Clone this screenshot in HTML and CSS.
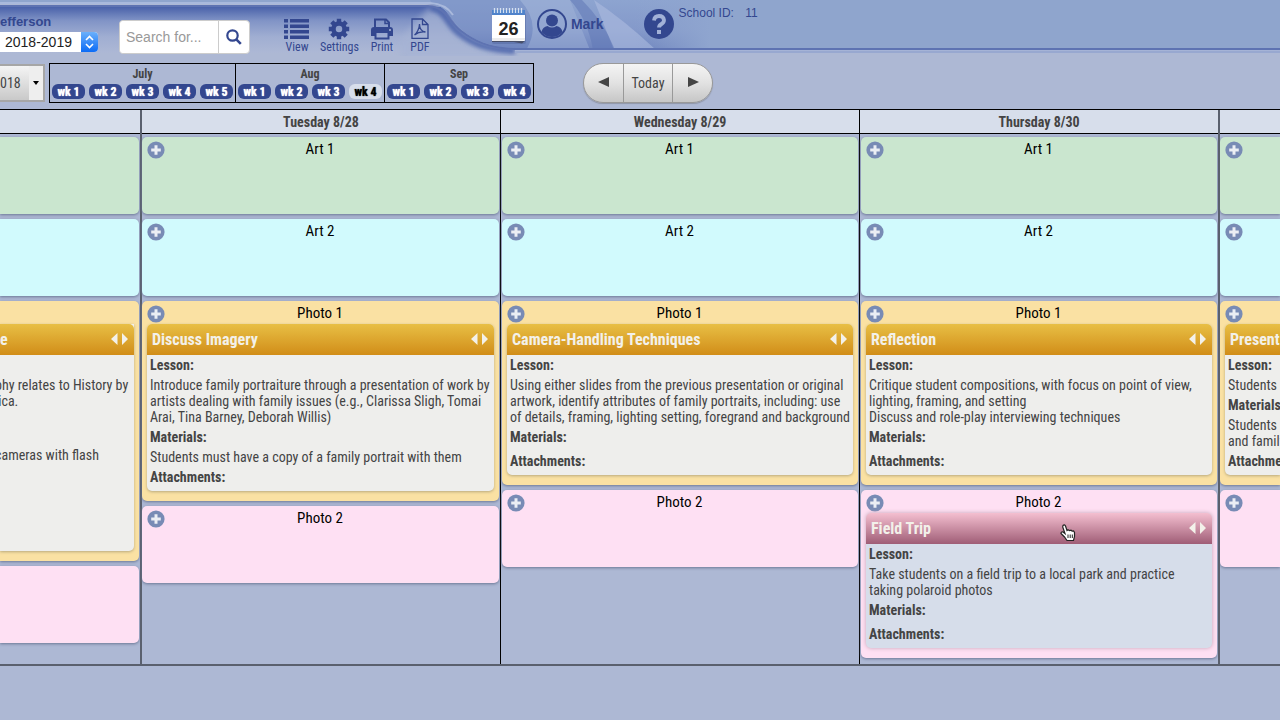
FILE: index.html
```html
<!DOCTYPE html>
<html lang="en">

<head>
    <meta charset="UTF-8">
    <meta name="viewport" content="width=device-width, initial-scale=1.0">
    <title>Lesson planner</title>
    <link rel="stylesheet" href="styles.css">
</head>

<body>
    <svg class="icon-defs" width="0" height="0">
        <symbol id="plus" viewBox="0 0 18 18">
            <circle cx="9" cy="9" r="8.6" fill="#788bb5"/>
            <path d="M9 4.2v9.6M4.2 9h9.6" stroke="#fff" stroke-opacity="0.85" stroke-width="3"/>
        </symbol>
        <symbol id="arrows" viewBox="0 0 18 14">
            <path d="M6.500 0v12L0 6zM11 0v12l6-6z" fill="#f3f1ea"/>
        </symbol>
    </svg>

    <header class="banner">
        <svg class="banner-art" height="56" aria-hidden="true">
            <defs>
                <linearGradient id="glow" x1="0" y1="0" x2="0" y2="1">
                    <stop offset="0" stop-color="#4a62aa"/>
                    <stop offset="0.3" stop-color="#8194c6"/>
                    <stop offset="0.65" stop-color="#a0aed2"/>
                    <stop offset="1" stop-color="#adb8d5"/>
                </linearGradient>
                <linearGradient id="sky" x1="0" y1="0" x2="0" y2="1">
                    <stop offset="0" stop-color="#8da4d0"/>
                    <stop offset="0.6" stop-color="#8499ca"/>
                    <stop offset="1" stop-color="#6d83bd"/>
                </linearGradient>
                <linearGradient id="fade" x1="0" y1="0" x2="1" y2="0">
                    <stop offset="0.5" stop-color="#8fa5cf" stop-opacity="0"/>
                    <stop offset="1" stop-color="#8fa5cf"/>
                </linearGradient>
                <filter id="soft"><feGaussianBlur stdDeviation="3"/></filter>
                <filter id="softer" x="-20%" y="-50%" width="140%" height="200%"><feGaussianBlur stdDeviation="2"/></filter>
                <clipPath id="skyClip"><path d="M0 0H4000V48H515C488 47 474 40 462 30C450 20 448 5 430 4H0z"/></clipPath>
            </defs>
            <rect y="7" width="470" height="46" fill="url(#glow)"/>
            <path d="M430 7C446 9 448 22 460 32C474 43 488 49 515 50V60H400V40z" fill="#a6b3d4" opacity="0.7" filter="url(#soft)"/>
            <path d="M430 8C446 9 446 24 460 34C474 45 490 50 515 51" stroke="#5068ad" stroke-width="6" fill="none" filter="url(#softer)"/>
            <path d="M0 0H4000V48H515C488 47 474 40 462 30C450 20 448 5 430 4H0z" fill="#8fa5cd"/>
            <g clip-path="url(#skyClip)">
                <rect x="430" width="280" height="50" fill="url(#sky)"/>
                <path d="M430 0h90q22 24 6 50h-60z" fill="#6f86bf" opacity="0.35"/>
                <path d="M520 0h50l20 50h-64q16-26-6-50z" fill="#a3b5da" opacity="0.45"/>
                <path d="M594 0q30 20 62 50h-42z" fill="#a8b8dd" opacity="0.7"/>
                <path d="M570 0h12q22 22 33 50h-22q-5-30-23-50z" fill="#6178b6" opacity="0.55"/>
                <rect x="560" width="150" height="50" fill="url(#fade)"/>
                <path d="M0 3H430Q446 4 453 15" stroke="#a9b9dc" stroke-width="2" fill="none"/>
            </g>
            <path d="M0 6H428C446 7 448 21 461 31C474 41 488 48 515 49H4000" stroke="#5e73b2" stroke-width="2" fill="none"/>
            <path d="M515 50.500H4000" stroke="#a5b3d6" stroke-width="1"/>
            <path d="M515 52H4000" stroke="#98a8d0" stroke-width="2"/>
        </svg>

        <div class="toolbar">
            <div class="school-year">
                <label for="year">efferson</label>
                <span class="year-box">
                    <select id="year">
                        <option>2018-2019</option>
                    </select>
                    <svg width="17" height="20" viewBox="0 0 17 20"><path d="M5 8l3.500-3.500L12 8M5 12l3.500 3.500L12 12" fill="none" stroke="#fff" stroke-width="1.600"/></svg>
                </span>
            </div>

            <form class="search">
                <input type="text" aria-label="Search" placeholder="Search for...">
                <button type="button" aria-label="Search">
                    <svg width="18" height="18" viewBox="0 0 18 18"><circle cx="7.500" cy="7.500" r="5.200" fill="none" stroke="#33478f" stroke-width="2.200"/><path d="M11.300 11.300l4.500 4.500" stroke="#33478f" stroke-width="2.600"/></svg>
                </button>
            </form>

            <nav class="tools">
                <button type="button">
                    <svg width="26" height="22" viewBox="0 0 26 22" fill="#33478f"><path d="M0 1h4v3.500H0zM6 1h19v3.500H6zM0 6.500h4V10H0zM6 6.500h19V10H6zM0 12h4v3.500H0zM6 12h19v3.500H6zM0 17.500h4V21H0zM6 17.500h19V21H6z"/></svg>
                    View
                </button>
                <button type="button">
                    <svg width="22" height="22" viewBox="0 0 22 22"><circle cx="11" cy="11" r="5.500" fill="none" stroke="#33478f" stroke-width="4.500"/><path d="M11 .8v4M11 17.200v4M.8 11h4M17.200 11h4M3.800 3.800l2.800 2.800M15.400 15.400l2.800 2.800M18.200 3.800l-2.800 2.800M6.600 15.400l-2.800 2.800" stroke="#33478f" stroke-width="4.400"/></svg>
                    Settings
                </button>
                <button type="button">
                    <svg width="24" height="22" viewBox="0 0 24 22"><path d="M5 10V1.500h11l3 3V10" fill="none" stroke="#33478f" stroke-width="2"/><path d="M15 1v4.500h4" fill="none" stroke="#33478f" stroke-width="1.500"/><path d="M1 12q0-3 3-3h16q3 0 3 3v6h-4v-3H5v3H1z" fill="#33478f"/><path d="M5.500 15v5.500h13V15" fill="none" stroke="#33478f" stroke-width="2"/><circle cx="20" cy="12" r="1" fill="#adb8d5"/></svg>
                    Print
                </button>
                <button type="button">
                    <svg width="18" height="22" viewBox="0 0 18 22" fill="none" stroke="#33478f" stroke-width="1.300"><path d="M1 1h10.500L17 6.500V20.300H1zM11.500 1v5.500H17"/><path d="M3.500 17c2-1.500 5-6 5-11 0 4 2 7.500 6 8-4-.5-8 .5-11 3z"/></svg>
                    PDF
                </button>
            </nav>

            <div class="account">
                <svg class="calendar" width="36" height="38" viewBox="0 0 36 38" role="img" aria-label="Calendar">
                    <rect x="1" y="6" width="34" height="31" rx="2" fill="#53679f" opacity="0.5"/>
                    <rect x="1" y="3" width="33" height="31" rx="1" fill="#fff"/>
                    <path d="M1 3h33v5H1z" fill="#4f83cb"/>
                    <path d="M3.500 1v5M6.500 1v5M9.500 1v5M12.500 1v5M15.500 1v5M18.500 1v5M21.500 1v5M24.500 1v5M27.500 1v5M30.500 1v5" stroke="#d5e1f1" stroke-width="1.300"/>
                    <path d="M1 34h33l-3 2.500-8-1.500H1z" fill="#48506b"/>
                    <path d="M1 31h33v2l-10 1H1z" fill="#ececec"/>
                    <text x="17.500" y="28" text-anchor="middle" class="calendar-day">26</text>
                </svg>
                <a class="user" href="#">
                    <svg width="32" height="32" viewBox="0 0 32 32"><circle cx="16" cy="16" r="14" fill="none" stroke="#33478f" stroke-width="2"/><circle cx="16" cy="12.500" r="6" fill="#33478f"/><path d="M5.500 24q1-5 6-6 4.500 3 9 0 5 1 6 6-4 5-10.500 5T5.500 24z" fill="#33478f"/></svg>
                    Mark
                </a>
                <a class="help" href="#" aria-label="Help">
                    <svg width="30" height="30" viewBox="0 0 30 30"><circle cx="15" cy="15" r="15" fill="#33478f"/><path d="M10 11.500Q10.500 7 15 7t5 4q0 2.500-2.500 4T15 18.500" fill="none" stroke="#a2b1d7" stroke-width="3.800"/><path d="M13 21h4v4h-4z" fill="#a2b1d7"/></svg>
                </a>
                <p class="school-id">School ID: <span>11</span></p>
            </div>
        </div>
    </header>

    <section class="weeks-bar">
        <button type="button" class="date-picker"><span class="date-text">018</span><span class="date-arrow"></span></button>

        <div class="months">
            <div class="month">
                <h2>July</h2>
                <div class="weeks">
                    <button type="button">wk 1</button>
                    <button type="button">wk 2</button>
                    <button type="button">wk 3</button>
                    <button type="button">wk 4</button>
                    <button type="button">wk 5</button>
                </div>
            </div>
            <div class="month">
                <h2>Aug</h2>
                <div class="weeks">
                    <button type="button">wk 1</button>
                    <button type="button">wk 2</button>
                    <button type="button">wk 3</button>
                    <button type="button" class="current">wk 4</button>
                </div>
            </div>
            <div class="month">
                <h2>Sep</h2>
                <div class="weeks">
                    <button type="button">wk 1</button>
                    <button type="button">wk 2</button>
                    <button type="button">wk 3</button>
                    <button type="button">wk 4</button>
                </div>
            </div>
        </div>

        <div class="day-nav">
            <button type="button" aria-label="Previous"><svg width="12" height="12"><path d="M11 1v10L0 6z" fill="#444"/></svg></button>
            <button type="button">Today</button>
            <button type="button" aria-label="Next"><svg width="12" height="12"><path d="M1 1v10l11-5z" fill="#444"/></svg></button>
        </div>
    </section>

    <main class="planner">
        <section class="day day-before">
            <h2 class="day-name"></h2>
            <div class="classes">
                <article class="class art1"></article>
                <article class="class art2"></article>
                <article class="class photo1">
                    <div class="class-head"></div>
                    <div class="lesson">
                        <div class="lesson-head"><h4>e</h4><svg width="18" height="14"><use href="#arrows"/></svg></div>
                        <div class="lesson-body">
                            <h5></h5>
                            <p>phy relates to History by<br>&nbsp;ica.</p>
                            <h5></h5>
                            <p class="late">cameras with flash</p>
                        </div>
                    </div>
                </article>
                <article class="class photo2"></article>
            </div>
        </section>

        <section class="day">
            <h2 class="day-name">Tuesday 8/28</h2>
            <div class="classes">
                <article class="class art1">
                    <div class="class-head"><button type="button" aria-label="Add lesson"><svg width="18" height="18"><use href="#plus"/></svg></button><h3>Art 1</h3></div>
                </article>
                <article class="class art2">
                    <div class="class-head"><button type="button" aria-label="Add lesson"><svg width="18" height="18"><use href="#plus"/></svg></button><h3>Art 2</h3></div>
                </article>
                <article class="class photo1">
                    <div class="class-head"><button type="button" aria-label="Add lesson"><svg width="18" height="18"><use href="#plus"/></svg></button><h3>Photo 1</h3></div>
                    <div class="lesson">
                        <div class="lesson-head"><h4>Discuss Imagery</h4><svg width="18" height="14"><use href="#arrows"/></svg></div>
                        <div class="lesson-body">
                            <h5>Lesson:</h5>
                            <p>Introduce family portraiture through a presentation of work by artists dealing with family issues (e.g., Clarissa Sligh, Tomai Arai, Tina Barney, Deborah Willis)</p>
                            <h5>Materials:</h5>
                            <p>Students must have a copy of a family portrait with them</p>
                            <h5>Attachments:</h5>
                        </div>
                    </div>
                </article>
                <article class="class photo2">
                    <div class="class-head"><button type="button" aria-label="Add lesson"><svg width="18" height="18"><use href="#plus"/></svg></button><h3>Photo 2</h3></div>
                </article>
            </div>
        </section>

        <section class="day">
            <h2 class="day-name">Wednesday 8/29</h2>
            <div class="classes">
                <article class="class art1">
                    <div class="class-head"><button type="button" aria-label="Add lesson"><svg width="18" height="18"><use href="#plus"/></svg></button><h3>Art 1</h3></div>
                </article>
                <article class="class art2">
                    <div class="class-head"><button type="button" aria-label="Add lesson"><svg width="18" height="18"><use href="#plus"/></svg></button><h3>Art 2</h3></div>
                </article>
                <article class="class photo1">
                    <div class="class-head"><button type="button" aria-label="Add lesson"><svg width="18" height="18"><use href="#plus"/></svg></button><h3>Photo 1</h3></div>
                    <div class="lesson">
                        <div class="lesson-head"><h4>Camera-Handling Techniques</h4><svg width="18" height="14"><use href="#arrows"/></svg></div>
                        <div class="lesson-body">
                            <h5>Lesson:</h5>
                            <p>Using either slides from the previous presentation or original artwork, identify attributes of family portraits, including: use of details, framing, lighting setting, foregrand and background</p>
                            <h5>Materials:</h5>
                            <p></p>
                            <h5>Attachments:</h5>
                        </div>
                    </div>
                </article>
                <article class="class photo2">
                    <div class="class-head"><button type="button" aria-label="Add lesson"><svg width="18" height="18"><use href="#plus"/></svg></button><h3>Photo 2</h3></div>
                </article>
            </div>
        </section>

        <section class="day">
            <h2 class="day-name">Thursday 8/30</h2>
            <div class="classes">
                <article class="class art1">
                    <div class="class-head"><button type="button" aria-label="Add lesson"><svg width="18" height="18"><use href="#plus"/></svg></button><h3>Art 1</h3></div>
                </article>
                <article class="class art2">
                    <div class="class-head"><button type="button" aria-label="Add lesson"><svg width="18" height="18"><use href="#plus"/></svg></button><h3>Art 2</h3></div>
                </article>
                <article class="class photo1">
                    <div class="class-head"><button type="button" aria-label="Add lesson"><svg width="18" height="18"><use href="#plus"/></svg></button><h3>Photo 1</h3></div>
                    <div class="lesson">
                        <div class="lesson-head"><h4>Reflection</h4><svg width="18" height="14"><use href="#arrows"/></svg></div>
                        <div class="lesson-body">
                            <h5>Lesson:</h5>
                            <p>Critique student compositions, with focus on point of view, lighting, framing, and setting<br>Discuss and role-play interviewing techniques</p>
                            <h5>Materials:</h5>
                            <p></p>
                            <h5>Attachments:</h5>
                        </div>
                    </div>
                </article>
                <article class="class photo2">
                    <div class="class-head"><button type="button" aria-label="Add lesson"><svg width="18" height="18"><use href="#plus"/></svg></button><h3>Photo 2</h3></div>
                    <div class="lesson dragging">
                        <div class="lesson-head"><h4>Field Trip</h4><svg width="18" height="14"><use href="#arrows"/></svg></div>
                        <div class="lesson-body">
                            <h5>Lesson:</h5>
                            <p>Take students on a field trip to a local park and practice taking polaroid photos</p>
                            <h5>Materials:</h5>
                            <p></p>
                            <h5>Attachments:</h5>
                        </div>
                        <svg class="hand" width="16" height="18" viewBox="0 0 16 18"><path d="M3 1.500Q4.500 0 5.500 2L7 6.500l1-.8 1.500.8 1.500-.4 1 .9 1.500-.2 1 1.700v4l-1 4H7L4.500 13 1 9.500Q1 7.500 3 8l2 1.500L2.700 3z" fill="#fff" stroke="#222" stroke-width="1.200"/><path d="M8 10.500v3.500M10.200 10.500v3.500M12.300 10.500v3.500" stroke="#222"/></svg>
                    </div>
                </article>
            </div>
        </section>

        <section class="day day-after">
            <h2 class="day-name"></h2>
            <div class="classes">
                <article class="class art1">
                    <div class="class-head"><button type="button" aria-label="Add lesson"><svg width="18" height="18"><use href="#plus"/></svg></button></div>
                </article>
                <article class="class art2">
                    <div class="class-head"><button type="button" aria-label="Add lesson"><svg width="18" height="18"><use href="#plus"/></svg></button></div>
                </article>
                <article class="class photo1">
                    <div class="class-head"><button type="button" aria-label="Add lesson"><svg width="18" height="18"><use href="#plus"/></svg></button></div>
                    <div class="lesson">
                        <div class="lesson-head"><h4>Present</h4></div>
                        <div class="lesson-body">
                            <h5>Lesson:</h5>
                            <p>Students</p>
                            <h5>Materials:</h5>
                            <p>Students<br>and family</p>
                            <h5>Attachments:</h5>
                        </div>
                    </div>
                </article>
                <article class="class photo2">
                    <div class="class-head"><button type="button" aria-label="Add lesson"><svg width="18" height="18"><use href="#plus"/></svg></button></div>
                </article>
            </div>
        </section>
    </main>
</body>

</html>
```

FILE: styles.css
```css
* {
    box-sizing: border-box;
}

body {
    margin: 0;
    background-color: #adb8d4;
    font-family: "Roboto Condensed", "Liberation Sans Narrow", Roboto, sans-serif;
    font-size: 14px;
    line-height: 16px;
    color: #444;
    overflow-x: hidden;
}

h2, h3, h4, h5, p {
    margin: 0;
}

button {
    font-family: inherit;
    padding: 0;
    border: none;
    background: none;
    color: inherit;
}

.icon-defs {
    position: absolute;
}

/* banner */
.banner {
    display: grid;
    height: 56px;
    overflow: hidden;
}

.banner-art {
    grid-area: 1 / 1;
    width: 100%;
}

.toolbar {
    grid-area: 1 / 1;
    display: flex;
    align-items: flex-start;
    font-family: "Liberation Sans", sans-serif;
    color: #33478f;
    z-index: 1;
}

.school-year {
    width: 98px;
    padding-top: 14px;
}

.school-year label {
    display: block;
    font-size: 13px;
    font-weight: bold;
}

.year-box {
    display: flex;
    height: 20px;
    margin-top: 2px;
    border-radius: 0 4px 4px 0;
    background-color: #fff;
    overflow: hidden;
}

.year-box svg {
    background: linear-gradient(#6bb0fb, #0b6bf5);
}

.year-box select {
    flex: 1;
    appearance: none;
    border: none;
    background: none;
    padding: 0 0 0 5px;
    font-family: inherit;
    font-size: 14px;
    color: #222;
}

.search {
    display: flex;
    width: 131px;
    height: 34px;
    margin: 20px 32px 0 21px;
    border: 1px solid #ccc;
    border-radius: 4px;
    background-color: #fff;
}

.search input {
    width: 99px;
    padding: 0 0 0 6px;
    border: none;
    border-right: 1px solid #ccc;
    border-radius: 4px 0 0 4px;
    font-family: inherit;
    font-size: 14px;
}

.search input::placeholder {
    color: #999;
}

.search button {
    flex: 1;
    line-height: 0;
}

.tools {
    display: flex;
    gap: 8px;
    padding-top: 18px;
    font-family: "Roboto Condensed", "Liberation Sans Narrow", Roboto, sans-serif;
}

.tools button {
    display: flex;
    flex-direction: column;
    align-items: center;
    min-width: 30px;
    font-size: 12px;
    line-height: 14px;
}

.account {
    display: flex;
    margin-left: 56px;
}

.calendar {
    margin-top: 7px;
}

.calendar-day {
    font: bold 18px "Liberation Sans", sans-serif;
    fill: #222;
}

.user {
    display: flex;
    align-items: center;
    gap: 3px;
    margin: 8px 40px 0 9px;
    height: 32px;
    font-size: 14px;
    font-weight: bold;
    color: inherit;
    text-decoration: none;
}

.help {
    margin-top: 9px;
}

.school-id {
    margin: 5px 0 0 5px;
    font-size: 12px;
}

.school-id span {
    margin-left: 8px;
}

/* week picker */
.weeks-bar {
    display: flex;
    padding: 7px 0 6px;
    height: 53px;
}

.date-picker {
    display: flex;
    width: 45px;
    height: 38px;
    margin: 1px 4px 0 0;
    border: 2px solid #a6a6a6;
    border-left: none;
    background: linear-gradient(#f4f4f4, #c9c9c9);
    font-size: 14px;
}

.date-text {
    width: 29px;
    line-height: 34px;
    text-align: left;
}

.date-arrow {
    flex: 1;
    height: 34px;
    background-color: #eee;
    display: flex;
    align-items: center;
    justify-content: center;
}

.date-arrow::before {
    content: "";
    border: 3px solid transparent;
    border-top: 4px solid #000;
    border-bottom: none;
}

.months {
    display: flex;
    height: 40px;
    border: 1px solid #000;
}

.month + .month {
    border-left: 1px solid #000;
}

.month h2 {
    padding-top: 2px;
    font-size: 12px;
    line-height: 16px;
    text-align: center;
}

.weeks {
    display: flex;
    gap: 4px;
    padding: 2px 2px 0;
}

.weeks button {
    width: 33px;
    height: 15px;
    border-radius: 6px;
    background-color: #33478f;
    color: #fff;
    font-size: 12px;
    font-weight: bold;
    line-height: 17px;
    text-shadow: 0 0 1px #fff;
}

.weeks .current {
    background-color: #d7deeb;
    color: #000;
    text-shadow: 0 0 1px #000;
}

.day-nav {
    display: flex;
    width: 130px;
    height: 40px;
    margin-left: 49px;
    border: 1px solid #999;
    border-radius: 20px;
    background: linear-gradient(#f4f4f4, #e2e2e2 50%, #c6c6c6);
    box-shadow: 0 1px 1px #8f96a8;
}

.day-nav button {
    width: 39px;
    font-size: 14px;
}

.day-nav button:nth-child(2) {
    flex: 1;
    border: solid #999;
    border-width: 0 1px;
}

/* planner */
.planner {
    display: grid;
    grid-template-columns: 140fr 360fr 359fr 359fr 62fr;
    border-top: 1px solid #000;
    border-bottom: 2px solid #5a606e;
}

.day {
    min-width: 0;
    border-left: 1px solid #000;
}

.day:nth-child(2),
.day-after {
    border-left: 2px solid #5a606e;
}

.day-before {
    border-left: none;
}

.day-before,
.day-after {
    overflow: hidden;
    white-space: nowrap;
}

.day-name {
    height: 24px;
    border-bottom: 1px solid #000;
    background-color: #d7deeb;
    font-size: 14px;
    line-height: 24px;
    text-align: center;
}

.classes {
    display: flex;
    flex-direction: column;
    gap: 5px;
    padding: 3px 1px 6px;
}

.day:nth-child(2) .classes,
.day-after .classes {
    padding-left: 0;
}

.class {
    min-height: 77px;
    border-radius: 5px;
    box-shadow: 0 1px 3px #6b7795;
}

.art1 {
    background-color: #cae6cf;
}

.art2 {
    background-color: #d1fafd;
}

.photo1 {
    background-color: #fae1a3;
    padding-bottom: 10px;
}

.photo2 {
    background-color: #fee0f3;
}

.class-head {
    display: grid;
    grid-template-columns: 1fr auto 1fr;
    height: 23px;
    padding: 0 6px 0 5px;
}

.class-head button {
    width: 18px;
    height: 18px;
    margin-top: 4px;
    line-height: 0;
}

.class-head h3 {
    font-size: 15px;
    font-weight: normal;
    line-height: 24px;
    color: #000;
}

.lesson {
    position: relative;
    margin: 0 5px;
    border-radius: 5px;
    background-color: #eeeeec;
    box-shadow: 0 1px 3px #b8a97e;
}

.lesson-head {
    display: flex;
    align-items: center;
    justify-content: space-between;
    height: 31px;
    padding: 0 5px;
    border-radius: 5px 5px 0 0;
    background: linear-gradient(#e8bf45, #d18d18);
}

.lesson-head h4 {
    font-size: 16px;
    color: #f3f1ea;
}

.lesson-body {
    display: flex;
    flex-direction: column;
    gap: 4px;
    padding: 2px 3px 6px;
}

.lesson-body h5 {
    min-height: 16px;
    font-size: 14px;
}

.dragging {
    margin-bottom: 10px;
    background-color: #d6ddea;
    box-shadow: 0 0 4px #c5a3b6;
}

.dragging .lesson-head {
    background: linear-gradient(#f4bfd0, #9f5d76);
}

.hand {
    position: absolute;
    top: 11px;
    left: 56%;
}

/* days cut by the window edges */
.day-before .class {
    border-radius: 0 5px 5px 0;
}

.day-before .classes {
    padding-left: 0;
}

.day-before .lesson {
    margin-left: 0;
    border-radius: 0 0 5px 0;
}

.day-before .lesson-head {
    padding-left: 0;
    border-radius: 0 5px 0 0;
}

.day-before .lesson-body {
    height: 196px;
    padding-left: 0;
}

.day-before .lesson-body p {
    margin-left: -5px;
}

.day-before .late {
    padding-top: 14px;
}

.day-after .classes {
    padding-right: 0;
}

.day-after .class {
    border-radius: 5px 0 0 5px;
}

.day-after .lesson {
    margin-right: 0;
    border-radius: 5px 0 0 5px;
}

.day-after .lesson-head {
    border-radius: 5px 0 0 0;
}
```
